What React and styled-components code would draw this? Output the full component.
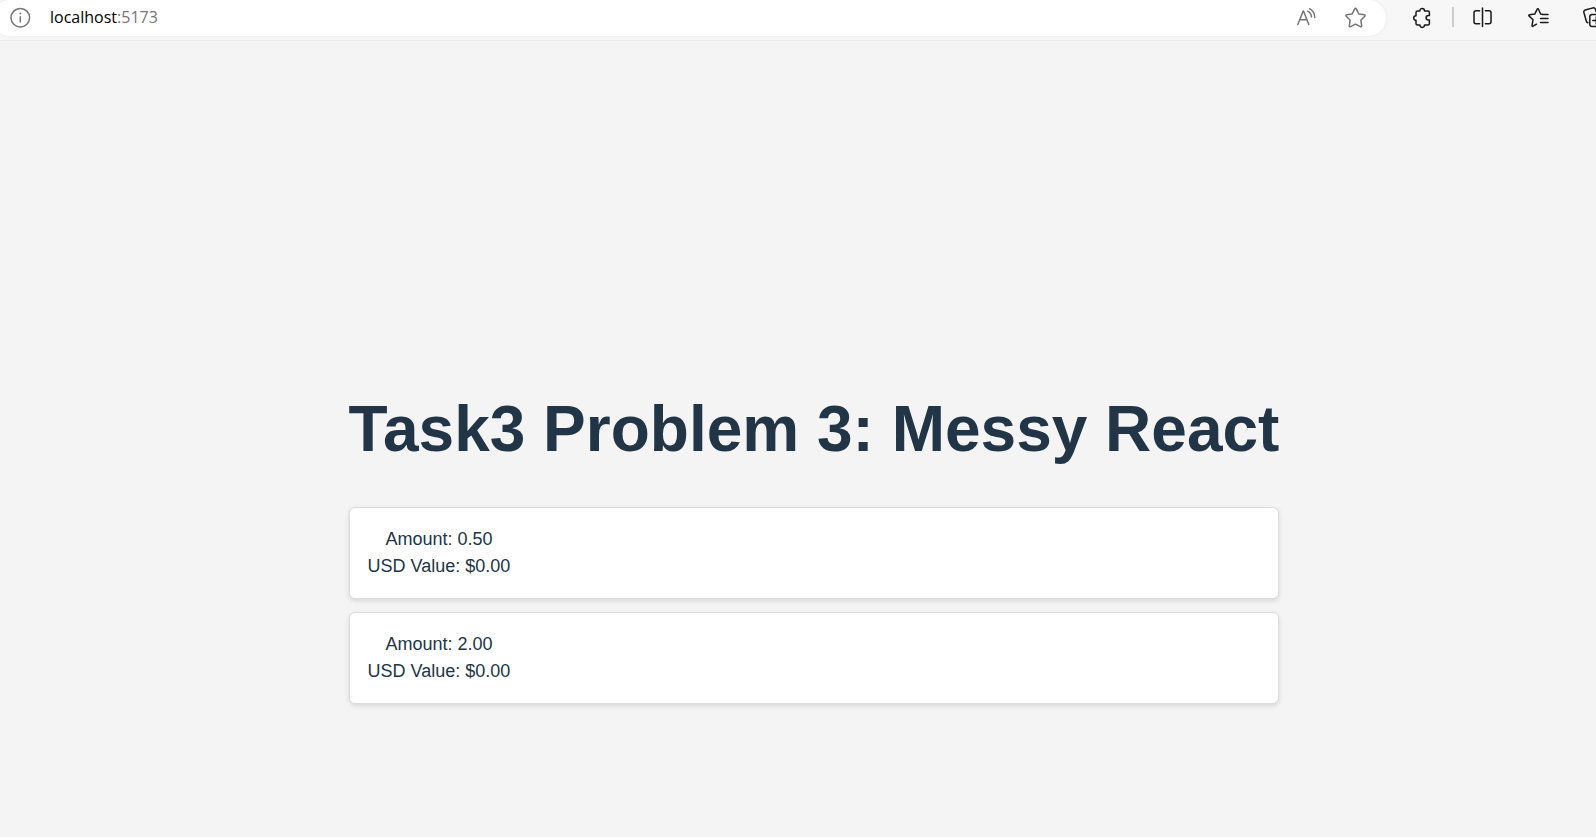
import React from "react";
import styled, { createGlobalStyle } from "styled-components";

const GlobalStyle = createGlobalStyle`
  *, *::before, *::after { box-sizing: border-box; }
  body {
    margin: 0;
    background: #f4f4f4;
    color: #213547;
    font-family: Arial, "Liberation Sans", sans-serif;
  }
`;

const Page = styled.div`
  min-height: 100vh;
  display: flex;
  flex-direction: column;
  overflow-x: hidden;
`;

const Toolbar = styled.header`
  display: flex;
  align-items: flex-start;
  gap: 24px;
  height: 41px;
  background: #f7f7f7;
  border-bottom: 1px solid #ebebeb;
  overflow: hidden;
`;

const AddressBar = styled.div`
  flex: 1;
  min-width: 0;
  display: flex;
  align-items: center;
  gap: 18px;
  height: 36px;
  margin-left: -8px;
  padding: 0 20px 2px 16px;
  background: #fff;
  border-radius: 18px;
  box-shadow: 0 0 4px rgba(0, 0, 0, 0.06);
`;

const Address = styled.div`
  flex: 1;
  font-family: "Segoe UI", "Open Sans", sans-serif;
  font-size: 16px;
  line-height: 24px;
  color: #767676;
`;

const Host = styled.span`
  color: #000;
`;

const Actions = styled.div`
  display: flex;
  align-items: center;
  gap: ${(p) => p.$gap}px;
  height: 34px;
`;

const ToolbarActions = styled(Actions)`
  margin-right: -10px;
`;

const IconButton = styled.button`
  flex: none;
  display: block;
  width: 24px;
  height: 24px;
  padding: 0;
  border: 0;
  background: none;
  color: ${(p) => (p.$muted ? "#767676" : "#1a1a1a")};

  svg {
    display: block;
    fill: none;
    stroke: currentColor;
    stroke-width: 1.5;
    stroke-linecap: round;
    stroke-linejoin: round;
  }
`;

const Divider = styled.span`
  width: 2px;
  height: 20px;
  margin: 0 16px 0 18px;
  background: #cecece;
`;

const Main = styled.main`
  display: flex;
  justify-content: center;
  padding: 352px 0 64px 32px;
`;

const Content = styled.div`
  display: flex;
  flex-direction: column;
`;

const Title = styled.h1`
  margin: 0 0 42px;
  font-size: 64px;
  line-height: 72px;
  font-weight: 700;
  white-space: nowrap;
`;

const WalletList = styled.div`
  display: flex;
  flex-direction: column;
  gap: 13px;
`;

const WalletRow = styled.div`
  display: flex;
  padding: 18px;
  background: #fff;
  border: 1px solid #dcdcdc;
  border-radius: 6px;
  box-shadow: 0 2px 5px rgba(0, 0, 0, 0.12);
`;

const WalletText = styled.div`
  font-size: 18px;
  line-height: 27px;
  text-align: center;
`;

function Icon({ children }) {
  return (
    <svg width="24" height="24" viewBox="0 0 24 24" aria-hidden="true">
      {children}
    </svg>
  );
}

const balances = [
  { id: 1, amount: "0.50", usd: "0.00" },
  { id: 2, amount: "2.00", usd: "0.00" },
];

export default function App() {
  return (
    <Page>
      <GlobalStyle />
      <Toolbar>
        <AddressBar>
          <IconButton $muted aria-label="View site information">
            <Icon>
              <circle cx="12.3" cy="12.7" r="9.3" />
              <path d="M12.3 11.7v5.2" />
              <path d="M12.3 8.5v.1" strokeWidth="1.8" />
            </Icon>
          </IconButton>
          <Address>
            <Host>localhost</Host>:5173
          </Address>
          <Actions $gap={24}>
            <IconButton $muted aria-label="Read aloud">
              <Icon>
                <path d="M3.8 19.5 9.2 6h.3L14.8 19.5M5.6 14.8h7.4" />
                <path d="M13.7 6.2c2.2 1.1 3.6 3.2 3.8 5.8M15.6 3.7c3.1 1.7 5 4.8 5.2 8.8" />
              </Icon>
            </IconButton>
            <IconButton $muted aria-label="Add to favorites">
              <Icon>
                <path d="M12.7 3.8a.9.9 0 0 1 1.6 0l2.5 5.1 5.5.8a.9.9 0 0 1 .5 1.5l-4 4 .9 5.6a.9.9 0 0 1-1.3.9l-4.9-2.5-4.9 2.5a.9.9 0 0 1-1.3-.9l.9-5.6-4-4a.9.9 0 0 1 .5-1.5l5.5-.8z" />
              </Icon>
            </IconButton>
          </Actions>
        </AddressBar>
        <ToolbarActions $gap={0}>
          <IconButton aria-label="Extensions">
            <Icon>
              <path d="M7.5 6h2.4V5.7a2.3 2.3 0 0 1 4.6 0V6h3.4a1.5 1.5 0 0 1 1.5 1.5v3h-1a2.3 2.3 0 0 0 0 4.6h1v3.3a1.5 1.5 0 0 1-1.5 1.5h-3.4v.2a2.3 2.3 0 0 1-4.6 0v-.2H7.5A1.5 1.5 0 0 1 6 18.400v-3.100a2.300 2.300 0 0 1 0-4.600V7.500A1.500 1.500 0 0 1 7.500 6z" />
            </Icon>
          </IconButton>
          <Divider />
          <Actions $gap={32}>
            <IconButton aria-label="Split screen">
              <Icon>
                <path d="M9.600 5.800H6a2 2 0 0 0-2 2v9a2 2 0 0 0 2 2h3.600M15.400 5.800H19a2 2 0 0 1 2 2v9a2 2 0 0 1-2 2h-3.600" />
                <path d="M12.500 3v18.500" />
              </Icon>
            </IconButton>
            <IconButton aria-label="Favorites">
              <Icon>
                <path d="M16.2 9.200l-1.600-.2-2.100-4.800a.7.7 0 0 0-1.300 0L8.900 8.900l-5.500.8a.7.7 0 0 0-.4 1.200l4 3.900-1 5.600a.7.7 0 0 0 1.100.8l3.400-2" />
                <path d="M16.500 9.500H22M14.500 13.500H22M14.500 17.500H22" />
              </Icon>
            </IconButton>
            <IconButton aria-label="Collections">
              <Icon>
                <path d="M5.800 17.700a2.200 2.200 0 0 1-1.500-1.700L1.900 7.500a2 2 0 0 1 1.400-2.500L11 2.900a2 2 0 0 1 2.400 1.400l.6 2" />
                <rect x="7.800" y="9.500" width="13" height="12" rx="2.300" />
                <path d="M14.300 12v7M10.800 15.500h7" />
              </Icon>
            </IconButton>
          </Actions>
        </ToolbarActions>
      </Toolbar>
      <Main>
        <Content>
          <Title>Task3 Problem 3: Messy React</Title>
          <WalletList>
            {balances.map((b) => (
              <WalletRow key={b.id}>
                <WalletText>
                  <div>Amount: {b.amount}</div>
                  <div>USD Value: ${b.usd}</div>
                </WalletText>
              </WalletRow>
            ))}
          </WalletList>
        </Content>
      </Main>
    </Page>
  );
}
